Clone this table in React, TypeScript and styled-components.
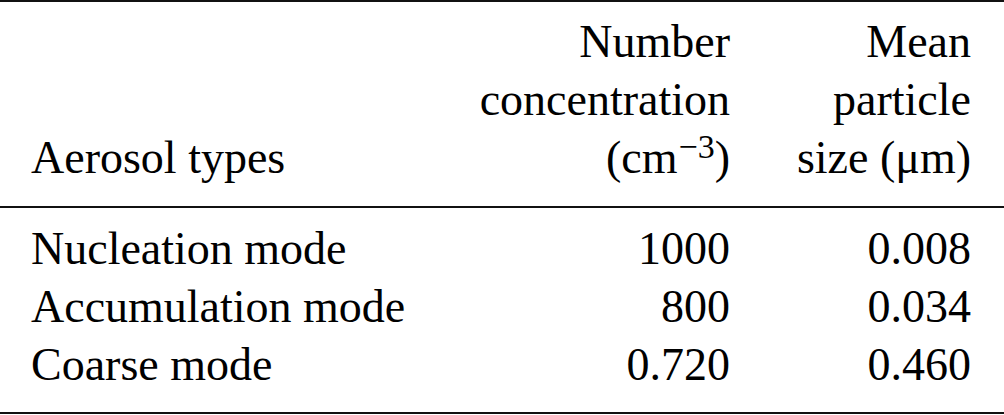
import styled, { createGlobalStyle } from "styled-components";

const GlobalStyle = createGlobalStyle`
  html, body {
    margin: 0;
    padding: 0;
    background: #ffffff;
  }
`;

const rows = [
  { type: "Nucleation mode", count: "1000", size: "0.008" },
  { type: "Accumulation mode", count: "800", size: "0.034" },
  { type: "Coarse mode", count: "0.720", size: "0.460" },
];

function App() {
  return (
    <>
      <GlobalStyle />
      <Table>
        <colgroup>
          <col />
          <col style={{ width: 290 }} />
          <col style={{ width: 274 }} />
        </colgroup>
        <thead>
          <tr>
            <HeadCell $align="left">Aerosol types</HeadCell>
            <HeadCell $align="right">
              Number
              <br />
              concentration
              <br />
              (cm<Sup>−3</Sup>)
            </HeadCell>
            <HeadCell $align="right">
              Mean
              <br />
              particle
              <br />
              size (μm)
            </HeadCell>
          </tr>
        </thead>
        <tbody>
          {rows.map((r, i) => (
            <tr key={r.type}>
              <BodyCell $align="left" $first={i === 0} $last={i === rows.length - 1}>
                {r.type}
              </BodyCell>
              <BodyCell $align="right" $first={i === 0} $last={i === rows.length - 1}>
                {r.count}
              </BodyCell>
              <BodyCell $align="right" $first={i === 0} $last={i === rows.length - 1}>
                {r.size}
              </BodyCell>
            </tr>
          ))}
        </tbody>
      </Table>
    </>
  );
}

const Table = styled.table`
  width: 1004px;
  table-layout: fixed;
  border-collapse: collapse;
  font-family: "Liberation Serif", "Times New Roman", serif;
  font-size: 46px;
  line-height: 58px;
  color: #000000;

  thead tr {
    border-top: 2px solid #111111;
    border-bottom: 2px solid #111111;
  }
  tbody tr:last-child {
    border-bottom: 2px solid #111111;
  }
`;

const Cell = styled.td<{ $align: "left" | "right" }>`
  text-align: ${(p) => p.$align};
  white-space: nowrap;
  padding-left: ${(p) => (p.$align === "left" ? "31px" : "0")};
  padding-right: 0;
  &:last-child {
    padding-right: 33px;
  }
`;

const HeadCell = styled(Cell).attrs({ as: "th" })`
  font-weight: 400;
  vertical-align: bottom;
  padding-top: 11px;
  padding-bottom: 19px;
`;

const BodyCell = styled(Cell)<{ $first?: boolean; $last?: boolean }>`
  vertical-align: baseline;
  padding-top: ${(p) => (p.$first ? "12px" : "0")};
  padding-bottom: ${(p) => (p.$last ? "18px" : "0")};
`;

const Sup = styled.span`
  font-size: 34px;
  line-height: 0;
  vertical-align: 15px;
  margin-left: 1px;
`;

export default App;
